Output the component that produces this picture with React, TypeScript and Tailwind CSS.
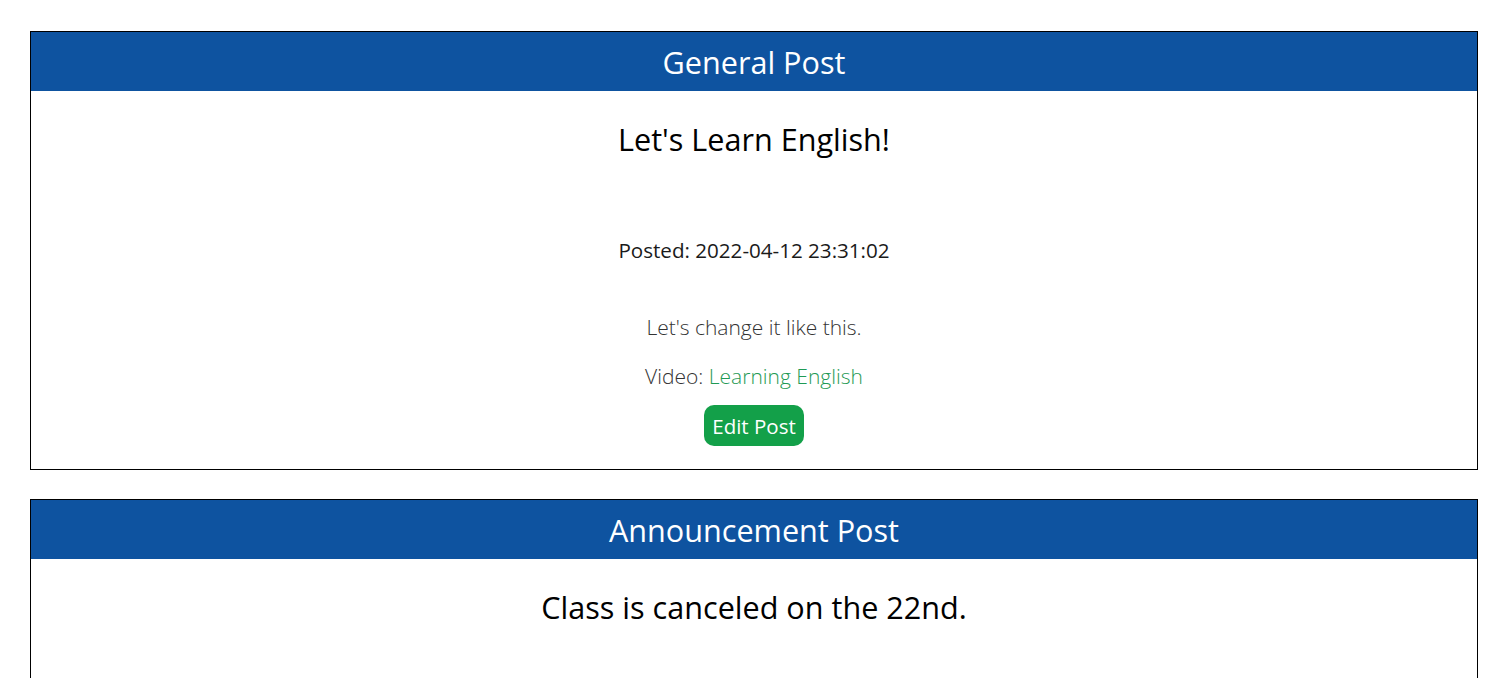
import React from 'react';

// Post cards as shown on the class board page.
type Post = {
    kind: string;
    title: string;
    posted?: string;
    body?: string;
    video?: { label: string; href: string };
    editable?: boolean;
};

const posts: Post[] = [
    {
        kind: 'General Post',
        title: "Let's Learn English!",
        posted: '2022-04-12 23:31:02',
        body: "Let's change it like this.",
        video: { label: 'Learning English', href: '#' },
        editable: true,
    },
    {
        kind: 'Announcement Post',
        title: 'Class is canceled on the 22nd.',
    },
];

const PostCard: React.FC<{ post: Post }> = ({ post }) => (
    <div className="border border-black bg-white mb-[29px]">
        <div className="h-[59px] bg-[#0e53a0] flex items-center justify-center">
            <h2 className="text-[30.6px] leading-[40px] font-medium text-white">{post.kind}</h2>
        </div>
        <div className="min-h-[377px] flex flex-col items-center text-center pb-[23px]">
            <h3 className="mt-[28px] text-[30.6px] leading-[40px] text-black">{post.title}</h3>
            {post.posted && (
                <p className="mt-[77px] text-[20.6px] leading-[28px] text-[#1a1a1a]">Posted: {post.posted}</p>
            )}
            {post.body && (
                <p className="mt-[49px] text-[21px] leading-[28px] font-light text-[#333]">{post.body}</p>
            )}
            {post.video && (
                <p className="mt-[21px] text-[21px] leading-[28px] font-light text-[#333]">
                    Video: <a href={post.video.href} className="text-[#1f9a55]">{post.video.label}</a>
                </p>
            )}
            {post.editable && (
                <button className="mt-[15px] h-[41px] px-[8px] rounded-[10px] bg-[#13a049] text-white text-[20.5px] leading-[28px]">
                    Edit Post
                </button>
            )}
        </div>
    </div>
);

export default function App() {
    return (
        <div className="min-h-screen bg-white pt-[31px] pl-[30px] font-['Open_Sans',sans-serif]">
            <div className="w-[1448px]">
                {posts.map(p => (
                    <PostCard key={p.kind} post={p} />
                ))}
            </div>
        </div>
    );
}
